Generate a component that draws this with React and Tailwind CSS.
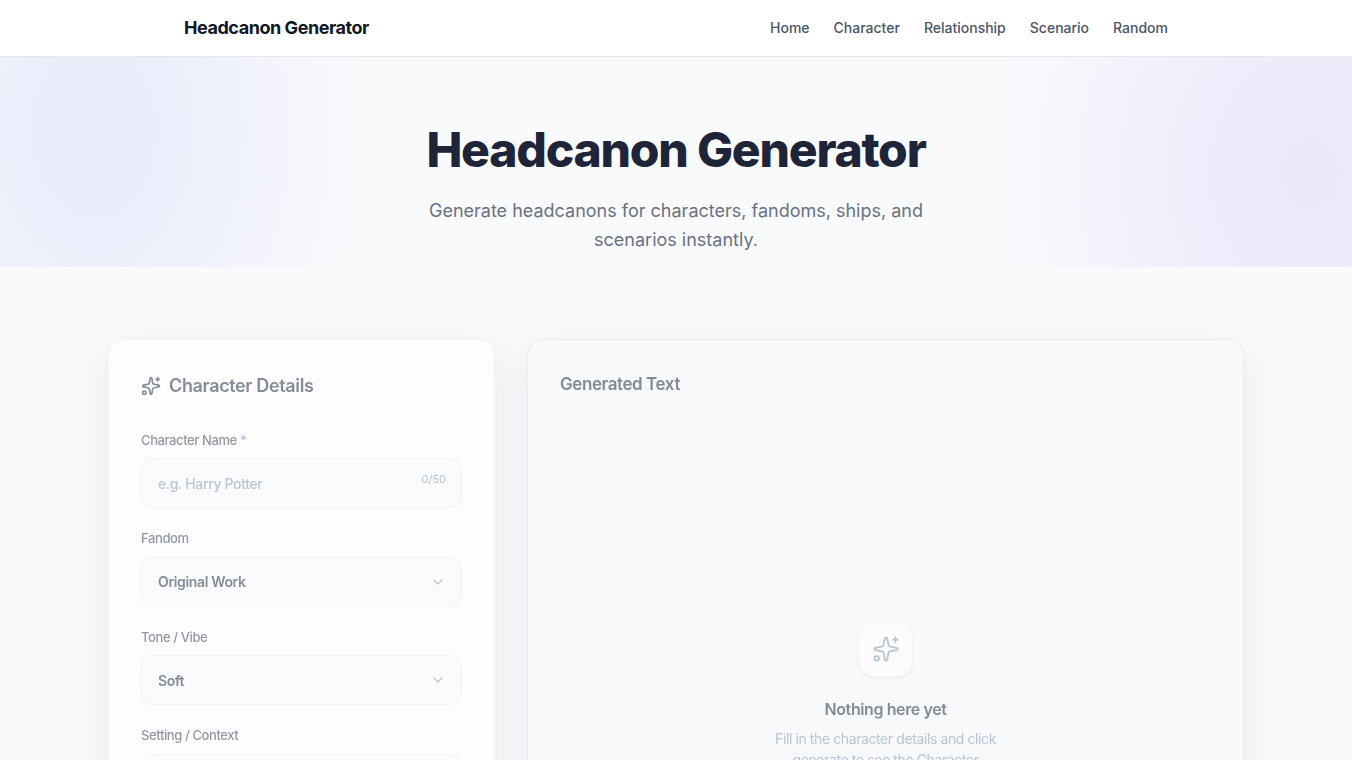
import React from 'react';
import { Sparkles, ChevronDown } from 'lucide-react';

const NAV_LINKS = ['Home', 'Character', 'Relationship', 'Scenario', 'Random'];

function Field({ label, required, children }) {
  return (
    <div>
      <label className="block mb-2 text-[13px] leading-[19.5px] font-medium text-gray-600">
        {label}
        {required && <span className="text-indigo-400"> *</span>}
      </label>
      {children}
    </div>
  );
}

function SelectBox({ value }) {
  return (
    <div className="relative">
      <select
        defaultValue={value}
        className="w-full h-[50px] px-4 pt-px appearance-none rounded-xl border border-gray-200/70 bg-gray-50 text-sm font-semibold tracking-tight text-gray-700 outline-none"
      >
        <option>{value}</option>
      </select>
      <ChevronDown className="absolute right-4 top-[17px] w-4 h-4 text-gray-400" />
    </div>
  );
}

export default function App() {
  return (
    <div className="h-screen overflow-hidden bg-[#f9fafc] font-['Inter',sans-serif]">
      {/* nav */}
      <header className="bg-white border-b border-gray-200">
        <div className="max-w-5xl mx-auto px-5 h-14 flex items-center justify-between">
          <span className="text-lg font-bold tracking-tight text-gray-900">Headcanon Generator</span>
          <nav className="flex items-center gap-6">
            {NAV_LINKS.map((link) => (
              <a key={link} href="#" className="text-sm font-medium text-gray-600">{link}</a>
            ))}
          </nav>
        </div>
      </header>

      {/* hero */}
      <section className="h-[210px] pt-[69px] flex flex-col items-center text-center bg-[radial-gradient(ellipse_270px_380px_at_7%_35%,#e9ebfa_0%,#eceefb_30%,transparent_100%),radial-gradient(ellipse_320px_380px_at_97%_55%,#ebe7fa_0%,#eeebfb_30%,transparent_100%)]">
        <h1 className="text-5xl leading-none font-extrabold tracking-tight text-[#1e2538]">Headcanon Generator</h1>
        <p className="mt-[22px] max-w-lg text-lg leading-[29px] text-gray-500">
          Generate headcanons for characters, fandoms, ships, and scenarios instantly.
        </p>
      </section>

      {/* tool */}
      <main className="max-w-[1136px] mx-auto mt-[72px] grid grid-cols-[387px_1fr] gap-8 items-start">
        <div className="bg-[#fdfdfe] rounded-2xl border border-gray-100 shadow-[0_10px_40px_rgba(15,23,42,0.07)] p-8">
          <div className="opacity-60 blur-[0.4px]">
            <h2 className="flex items-center gap-2 mb-[31.5px] text-lg leading-[27px] font-semibold tracking-[-0.02em] text-gray-700">
              <Sparkles className="w-5 h-5" />
              Character Details
            </h2>
            <div className="flex flex-col gap-[21px] tracking-tight">
              <Field label="Character Name" required>
                <div className="relative">
                  <input
                    placeholder="e.g. Harry Potter"
                    className="w-full h-[50px] px-4 rounded-xl border border-gray-200/70 bg-gray-50 text-sm font-medium tracking-tight outline-none placeholder:text-slate-400"
                  />
                  <span className="absolute right-4 top-[13px] text-[11px] leading-4 tracking-normal text-slate-400">0/50</span>
                </div>
              </Field>
              <Field label="Fandom"><SelectBox value="Original Work" /></Field>
              <Field label="Tone / Vibe"><SelectBox value="Soft" /></Field>
              <Field label="Setting / Context"><SelectBox value="Everyday Life" /></Field>
            </div>
          </div>
        </div>

        <div className="h-[600px] bg-[#f8f9fb] rounded-2xl border border-gray-200/70 shadow-[0_10px_40px_rgba(15,23,42,0.07)] p-8">
          <div className="opacity-60 blur-[0.4px]">
            <h2 className="text-[17px] leading-6 font-semibold tracking-tight text-gray-700">Generated Text</h2>
            <div className="mt-[226px] flex flex-col items-center text-center tracking-tight">
              <div className="w-[55px] h-[55px] flex items-center justify-center rounded-2xl bg-white border border-gray-100 shadow-sm">
                <Sparkles className="w-7 h-7 mb-0.5 text-slate-400" strokeWidth={1.5} />
              </div>
              <h3 className="mt-5 text-base leading-6 font-semibold text-gray-700">Nothing here yet</h3>
              <p className="mt-[6.5px] max-w-[260px] text-sm leading-[21px] text-slate-400">
                Fill in the character details and click generate to see the Character headcanon.
              </p>
            </div>
          </div>
        </div>
      </main>
    </div>
  );
}
